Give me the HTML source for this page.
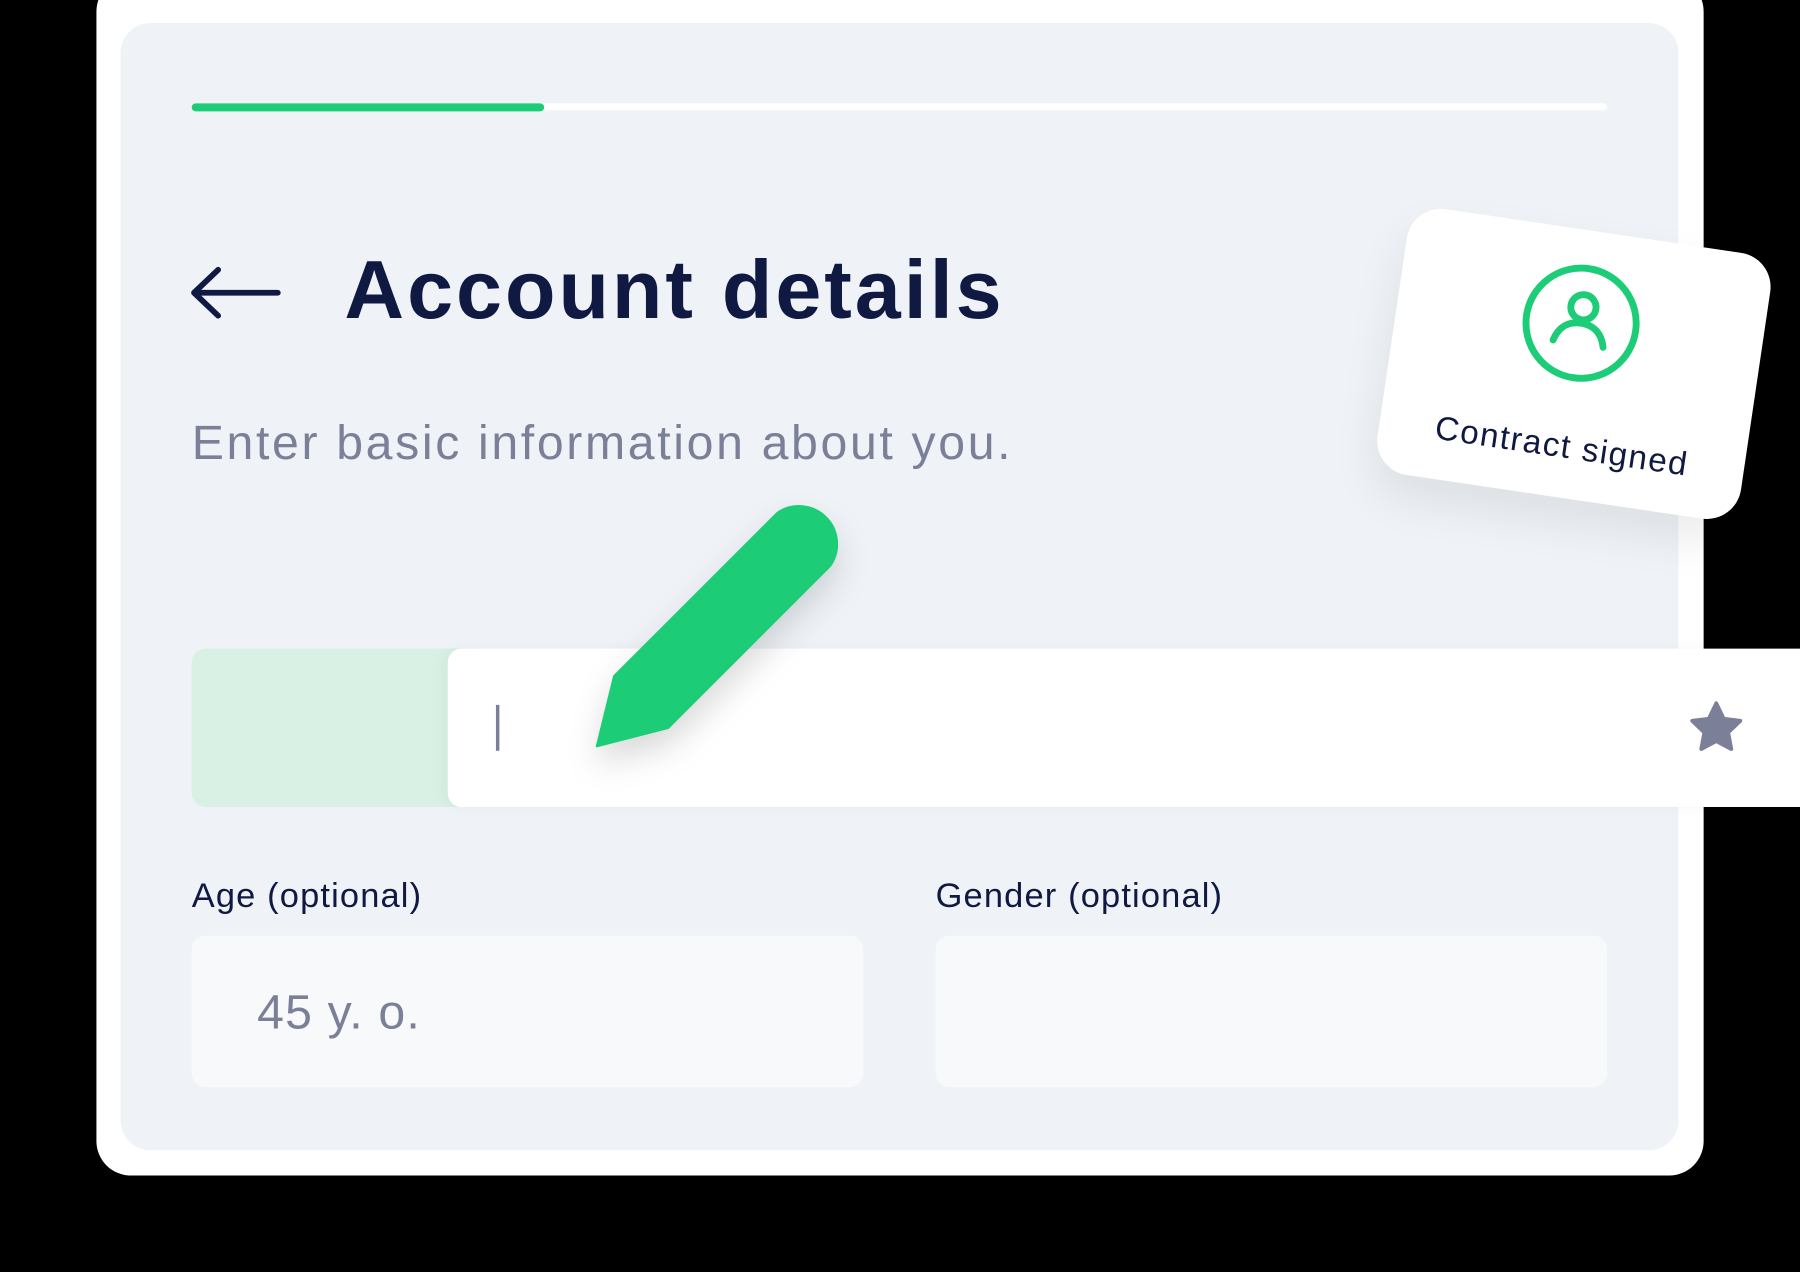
<!DOCTYPE html>
<html><head><meta charset="utf-8"><style>
html,body{margin:0;padding:0;background:#000;width:1800px;height:1272px;overflow:hidden}
#s{position:absolute;left:0;top:0;width:1568px;height:1108px;transform:scale(1.148);transform-origin:0 0;font-family:"Liberation Sans",sans-serif}
.a{position:absolute}
</style></head><body><div id="s">
<div class="a" style="left:84px;top:-20px;width:1400px;height:1044px;background:#fff;border-radius:30px"></div>
<div class="a" style="left:105px;top:20px;width:1357px;height:982px;background:#eff3f7;border-radius:26px"></div>
<div class="a" style="left:167px;top:90px;width:1233px;height:6px;background:#fff;border-radius:3px"></div>
<div class="a" style="left:167px;top:90px;width:307px;height:7px;background:#1ccc76;border-radius:4px"></div>
<svg class="a" style="left:160px;top:225px" width="90" height="60" viewBox="0 0 90 60"><path d="M82 30H10M30 10L9 30L30 50" fill="none" stroke="#0f1941" stroke-width="5" stroke-linecap="round" stroke-linejoin="round"/></svg>
<div class="a" style="left:300px;top:212px;font-size:72px;font-weight:bold;color:#0f1941;white-space:nowrap;letter-spacing:2.6px">Account details</div>
<div class="a" style="left:167px;top:362px;font-size:42px;color:#7b8098;white-space:nowrap;letter-spacing:2.3px">Enter basic information about you.</div>
<div class="a" style="left:167px;top:565px;width:260px;height:138px;background:#d9f0e5;border-radius:12px"></div>
<div class="a" style="left:390px;top:565px;width:1178px;height:138px;background:#fff;border-radius:12px 0 0 12px;box-shadow:-4px 0 12px rgba(0,0,0,0.04)"></div>
<div class="a" style="left:432px;top:614px;width:3px;height:40px;background:#7b8098"></div>
<svg class="a" style="left:1467px;top:607px" width="56" height="54" viewBox="0 0 24 24"><path d="M12 2.5l2.9 6 6.4.8-4.7 4.5 1.2 6.4L12 17.1l-5.8 3.1 1.2-6.4-4.7-4.5 6.4-.8z" fill="#7b8098" stroke="#7b8098" stroke-width="1.5" stroke-linejoin="round"/></svg>
<svg class="a" style="left:0;top:0" width="1568" height="1108"><defs><filter id="f" x="-50%" y="-50%" width="200%" height="200%"><feDropShadow dx="0" dy="14" stdDeviation="14" flood-color="#000" flood-opacity="0.15"/></filter></defs>
<path d="M677,447 L535,589 L520,650 L582,634 L723,493 A33,33 0 0 0 677,447 Z" fill="#1ccc76" stroke="#1ccc76" stroke-width="2" stroke-linejoin="round" filter="url(#f)"/></svg>
<div class="a" style="left:167px;top:764px;font-size:30px;color:#0f1941;letter-spacing:1px">Age (optional)</div>
<div class="a" style="left:815px;top:764px;font-size:30px;color:#0f1941;letter-spacing:1px">Gender (optional)</div>
<div class="a" style="left:167px;top:815px;width:585px;height:132px;background:#f7f9fb;border-radius:12px"></div>
<div class="a" style="left:815px;top:815px;width:585px;height:132px;background:#f7f9fb;border-radius:12px"></div>
<div class="a" style="left:224px;top:858px;font-size:42px;color:#7b8098;letter-spacing:1px">45 y. o.</div>
<div class="a" style="left:1211px;top:200px;width:320px;height:234px;background:#fff;border-radius:30px;transform:rotate(8.4deg);box-shadow:0 20px 40px rgba(0,0,0,0.08)">
<svg class="a" style="left:109px;top:29px" width="104" height="104" viewBox="0 0 104 104"><circle cx="52" cy="52" r="48" fill="none" stroke="#1ccc76" stroke-width="6"/><circle cx="52" cy="38" r="11" fill="none" stroke="#1ccc76" stroke-width="6"/><path d="M30 70c3-12 11-18 22-18s19 6 22 18" fill="none" stroke="#1ccc76" stroke-width="6" stroke-linecap="round"/></svg>
<div class="a" style="left:0;top:174px;width:320px;text-align:center;font-size:29px;color:#0f1941;white-space:nowrap;letter-spacing:1.3px">Contract signed</div>
</div>
</div></body></html>
